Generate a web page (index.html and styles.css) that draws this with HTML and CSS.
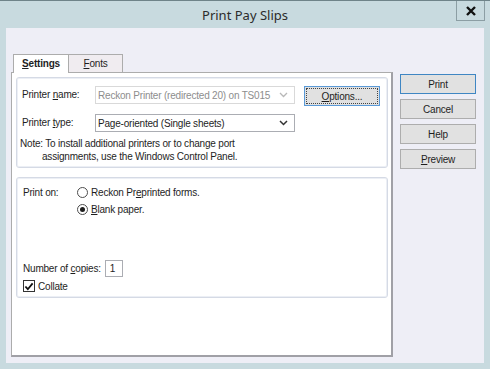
FILE: index.html
```html
<!DOCTYPE html>
<html lang="en">
<head>
  <meta charset="UTF-8">
  <title>Print Pay Slips</title>
  <link rel="stylesheet" href="styles.css">
</head>
<body>
<div class="ventana">
  <div class="barra-titulo">
    <span></span>
    <span class="titulo">Print Pay Slips</span>
    <button class="cerrar">
      <svg width="12" height="10" viewBox="0 0 12 10"><path d="M2 1 L10 9 M10 1 L2 9" stroke="#111" stroke-width="2.4"/></svg>
    </button>
  </div>

  <div class="cliente">
    <div class="zona-pestanas">
      <div class="pestanas">
        <div class="pestana activa"><u>S</u>ettings</div>
        <div class="pestana"><u>F</u>onts</div>
      </div>
      <div class="panel">
        <div class="grupo grupo-impresora">
          <div class="fila">
            <label class="etiqueta">Printer <u>n</u>ame:</label>
            <div class="combo deshabilitado">
              <span>Reckon Printer (redirected 20) on TS015</span>
              <svg width="9" height="6" viewBox="0 0 9 6"><path d="M1 1 L4.5 4.5 L8 1" fill="none" stroke="#b8b8b8" stroke-width="1.3"/></svg>
            </div>
            <button class="boton boton-opciones"><span class="foco"><u>O</u>ptions...</span></button>
          </div>
          <div class="fila fila-tipo">
            <label class="etiqueta">Printer <u>t</u>ype:</label>
            <div class="combo">
              <span>Page-oriented (Single sheets)</span>
              <svg width="9" height="6" viewBox="0 0 9 6"><path d="M1 1 L4.5 4.5 L8 1" fill="none" stroke="#333" stroke-width="1.5"/></svg>
            </div>
          </div>
          <p class="nota">Note: To install additional printers or to change port<br>assignments, use the Windows Control Panel.</p>
        </div>

        <div class="grupo grupo-papel">
          <div class="imprimir-en">
            <span class="etiqueta-corta">Print on:</span>
            <div class="opciones">
              <div class="opcion"><span class="radio"></span><span>Reckon Pr<u>e</u>printed forms.</span></div>
              <div class="opcion"><span class="radio marcado"></span><span><u>B</u>lank paper.</span></div>
            </div>
          </div>
          <div class="copias">
            <div class="fila-copias"><span>Number of <u>c</u>opies:</span><span class="caja-numero">1</span></div>
            <div class="fila-cotejar">
              <span class="casilla">
                <svg width="11" height="11" viewBox="0 0 11 11"><path d="M1.5 5.5 L4.2 8.5 L9.5 2" fill="none" stroke="#111" stroke-width="2"/></svg>
              </span>
              <span>Collate</span>
            </div>
          </div>
        </div>
      </div>
    </div>

    <div class="botones">
      <button class="boton predeterminado">Print</button>
      <button class="boton">Cancel</button>
      <button class="boton">Help</button>
      <button class="boton"><u>P</u>review</button>
    </div>
  </div>
</div>
</body>
</html>
```

FILE: styles.css
```css
body {
  margin: 0;
  padding: 0;
  background-color: #c8dadf;
  font-family: "Liberation Sans", Arial, sans-serif;
  font-size: 10px;
  letter-spacing: -0.2px;
  color: #1e1e1e;
}

u {
  text-decoration-thickness: 1px;
  text-underline-offset: 1px;
}

.ventana {
  width: 490px;
  height: 369px;
  box-sizing: border-box;
  border-top: 1px solid #6f8389;
}

.barra-titulo {
  height: 27px;
  display: grid;
  grid-template-columns: 1fr auto 1fr;
  align-items: start;
}

.titulo {
  font-family: "Noto Sans", sans-serif;
  font-size: 13px;
  letter-spacing: 0;
  color: #2b2b2b;
  line-height: 28px;
}

.cerrar {
  justify-self: end;
  margin-right: 5px;
  width: 29px;
  height: 20px;
  padding: 0;
  border: 1px solid #8c9ea4;
  border-top: none;
  background: #c8dadf;
  display: flex;
  align-items: center;
  justify-content: center;
}

.cliente {
  margin: 0 6px;
  height: 335px;
  box-sizing: border-box;
  background-color: #eeeef6;
  padding: 26px 0 0 5px;
  display: flex;
  gap: 7px;
}

.zona-pestanas {
  width: 382px;
}

.pestanas {
  display: flex;
  padding-left: 2px;
  height: 18px;
  position: relative;
  z-index: 1;
}

.pestana {
  width: 55px;
  height: 18px;
  box-sizing: border-box;
  border: 1px solid #acacac;
  border-bottom: none;
  text-align: center;
  line-height: 17px;
  background: #f0ecf0;
}

.pestana.activa {
  background: #fff;
  font-weight: bold;
  height: 19px;
  border-right: none;
}

.panel {
  height: 285px;
  box-sizing: border-box;
  background: #fff;
  border: 1px solid #acacac;
  border-right: 2px solid #a0a0a6;
  border-bottom: 2px solid #a0a0a6;
  padding: 4px 3px 0 4px;
  display: flex;
  flex-direction: column;
  gap: 9px;
}

.grupo {
  border: 1px solid #d5dae5;
  border-radius: 3px;
  box-shadow: inset 0 0 0 1px #eceff5;
}

.grupo-impresora {
  height: 91px;
  box-sizing: border-box;
  padding: 8px 6px 0 5px;
}

.fila {
  display: flex;
  align-items: flex-start;
  height: 20px;
}

.fila-tipo {
  margin-top: 8px;
  height: 18px;
}

.etiqueta {
  width: 73px;
  line-height: 18px;
}

.combo {
  width: 200px;
  height: 18px;
  box-sizing: border-box;
  border: 1px solid #abadb3;
  display: flex;
  align-items: center;
  justify-content: space-between;
  padding: 0 6px 0 2px;
  white-space: nowrap;
}

.combo.deshabilitado {
  border-color: #d9d9d9;
  color: #8d8d8d;
}

.nota {
  margin: 5px 0 0 -2px;
  padding-left: 22px;
  text-indent: -22px;
  line-height: 13px;
}

.boton {
  width: 76px;
  height: 20px;
  padding: 0;
  border: 1px solid #adadad;
  background: #e1e1e1;
  font-family: "Liberation Sans", Arial, sans-serif;
  font-size: 10px;
  letter-spacing: -0.2px;
  color: #1e1e1e;
}

.boton-opciones {
  margin-left: 9px;
  border-color: #5a9ad8;
  padding: 1px;
}

.foco {
  display: block;
  height: 100%;
  box-sizing: border-box;
  border: 1px dotted #444;
  line-height: 16px;
}

.predeterminado {
  border-color: #3f86c3;
}

.botones {
  margin-top: 20px;
  display: flex;
  flex-direction: column;
  gap: 5px;
}

.grupo-papel {
  height: 121px;
  box-sizing: border-box;
  padding: 8px 6px 5px 6px;
  display: flex;
  flex-direction: column;
}

.imprimir-en {
  display: flex;
}

.etiqueta-corta {
  width: 54px;
  line-height: 13px;
}

.opciones {
  display: flex;
  flex-direction: column;
  gap: 4px;
}

.opcion {
  display: flex;
  align-items: center;
  gap: 3px;
  line-height: 13px;
}

.radio {
  width: 11px;
  height: 11px;
  box-sizing: border-box;
  border: 1px solid #4d4d4d;
  border-radius: 50%;
  background: #fff;
  display: flex;
  align-items: center;
  justify-content: center;
}

.radio.marcado::after {
  content: "";
  width: 5px;
  height: 5px;
  border-radius: 50%;
  background: #1e1e1e;
}

.copias {
  margin-top: auto;
}

.fila-copias {
  display: flex;
  align-items: center;
  gap: 4px;
}

.caja-numero {
  width: 18px;
  height: 17px;
  box-sizing: border-box;
  border: 1px solid #abadb3;
  padding-left: 4px;
  line-height: 15px;
}

.fila-cotejar {
  margin-top: 3px;
  display: flex;
  align-items: center;
  gap: 3px;
}

.casilla {
  width: 12px;
  height: 12px;
  box-sizing: border-box;
  border: 1px solid #333;
  background: #fff;
  display: flex;
  align-items: center;
  justify-content: center;
}
```
